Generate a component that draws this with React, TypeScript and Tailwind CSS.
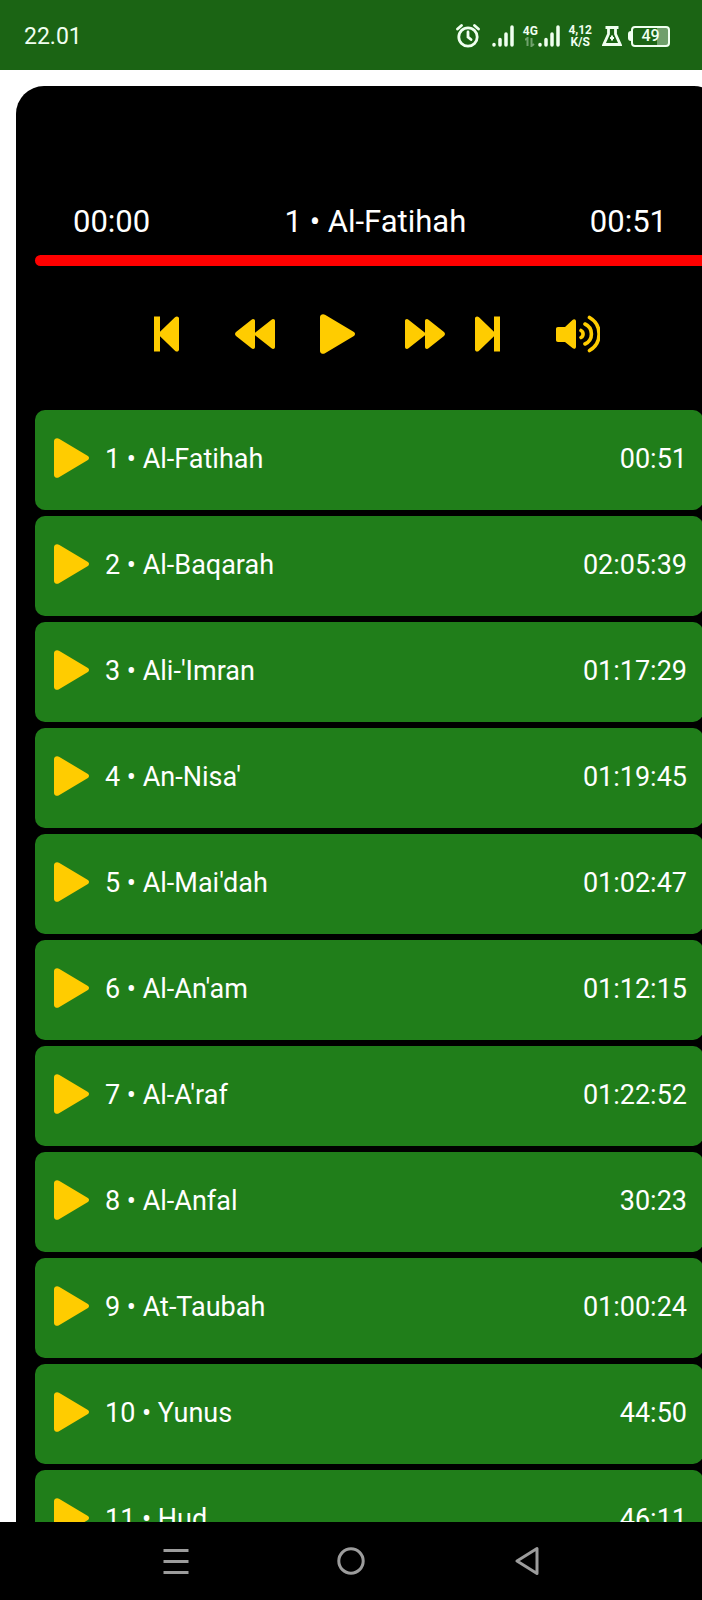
import { useState } from "react";

const surahs = [
  { title: "1 • Al-Fatihah", duration: "00:51" },
  { title: "2 • Al-Baqarah", duration: "02:05:39" },
  { title: "3 • Ali-'Imran", duration: "01:17:29" },
  { title: "4 • An-Nisa'", duration: "01:19:45" },
  { title: "5 • Al-Mai'dah", duration: "01:02:47" },
  { title: "6 • Al-An'am", duration: "01:12:15" },
  { title: "7 • Al-A'raf", duration: "01:22:52" },
  { title: "8 • Al-Anfal", duration: "30:23" },
  { title: "9 • At-Taubah", duration: "01:00:24" },
  { title: "10 • Yunus", duration: "44:50" },
  { title: "11 • Hud", duration: "46:11" },
];

function PlayIcon() {
  return (
    <svg width="35" height="40" viewBox="0 0 35 40" fill="currentColor" className="shrink-0">
      <path d="M0 3C0 .6 2.800-.6 5 .7L33.500 17.800c2 1.200 2 3.200 0 4.400L5 39.300C2.800 40.600 0 39.400 0 37Z" />
    </svg>
  );
}

function SkipIcon({ back = false }: { back?: boolean }) {
  return (
    <svg width="25" height="36" viewBox="0 0 25 36" fill="currentColor" className={back ? "-scale-x-100" : ""}>
      <path d="M0 2.500C0 .4 2.400-.2 4 1.300l15 14.500V.5h6v35h-6V20.200L4 34.700C2.400 36.200 0 35.600 0 33.500Z" />
    </svg>
  );
}

function SeekIcon({ back = false }: { back?: boolean }) {
  return (
    <svg width="40" height="30" viewBox="0 0 40 30" fill="currentColor" className={back ? "-scale-x-100" : ""}>
      <path d="M0 2C0 .2 2-.5 3.500.7L20 13.800V2c0-1.800 2-2.500 3.500-1.300L39 13c1.300 1.200 1.300 2.800 0 4L23.500 29.300C22 30.500 20 29.800 20 28V16.200L3.500 29.300C2 30.500 0 29.800 0 28Z" />
    </svg>
  );
}

function VolumeIcon() {
  return (
    <svg width="44" height="38" viewBox="0 0 44 38" fill="none" stroke="currentColor" strokeWidth="3.600" strokeLinecap="round">
      <path
        d="M2 12h7L16.500 5c1.500-1.300 3.500-.8 3.500 1.300v25.400c0 2.100-2 2.600-3.500 1.300L9 27H2c-1.300 0-2-.7-2-2V14c0-1.300.7-2 2-2Z"
        fill="currentColor"
        stroke="none"
      />
      <path d="M25 15.500a4 4 0 0 1 0 7M29 9a11 11 0 0 1 0 20M33.500 2.500a19 19 0 0 1 0 33" />
    </svg>
  );
}

function SignalIcon() {
  return (
    <svg width="22" height="22" viewBox="0 0 22 22" stroke="currentColor" strokeWidth="3.500" strokeLinecap="round">
      <path d="M2 19.500v.5M8 14.500V20M14 9V20M20 2v18" />
    </svg>
  );
}

function StatusBar() {
  return (
    <header className="flex h-[70px] shrink-0 items-center justify-between bg-[#1b6414] pt-0.5 pr-8 pl-6 text-[#f0fff0]">
      <time className="pt-0.5 text-[23px]">22.01</time>
      <div className="flex items-center">
        <svg width="24" height="24" viewBox="0 0 24 24" fill="none" stroke="currentColor" strokeWidth="2.800" strokeLinecap="round">
          <circle cx="12" cy="13" r="9.200" />
          <path d="M12 8v5l3 2.500M1.500 5l4-3.500M22.500 5l-4-3.500" />
        </svg>
        <div className="ml-3">
          <SignalIcon />
        </div>
        <div className="ml-2 flex w-4 flex-col items-center text-xs leading-3 font-bold">
          <span>4G</span>
          <svg width="10" height="10" viewBox="0 0 10 10" fill="none" stroke="currentColor" strokeWidth="2" opacity="0.400">
            <path d="M0 3l2.500-2v8M6.500 1v8L9 7" />
          </svg>
        </div>
        <SignalIcon />
        <div className="ml-2 flex flex-col items-center text-xs leading-3 font-bold">
          <span>4,12</span>
          <span>K/S</span>
        </div>
        <svg width="20" height="20" viewBox="0 0 20 20" fill="none" stroke="currentColor" strokeWidth="2.800" className="ml-2.5">
          <path d="M3.500 1.500h13M6.500 2v6L1.800 18.500h16.400L13.500 8V2" />
          <path d="M10 9.500v5M8 12h4" strokeWidth="2" />
        </svg>
        <div className="ml-1.5 h-2.5 w-[3px] rounded-l-sm bg-current" />
        <div className="flex h-[21px] w-[39px] items-center justify-center rounded-sm border-2 border-current bg-linear-to-r from-transparent from-70% to-[#6f9f6b] to-70% text-base font-medium">
          49
        </div>
      </div>
    </header>
  );
}

function Controls() {
  return (
    <div className="mt-12 ml-[119px] flex h-10 items-center text-[#ffcc00]">
      <button aria-label="Previous">
        <SkipIcon back />
      </button>
      <button aria-label="Rewind" className="ml-14">
        <SeekIcon back />
      </button>
      <button aria-label="Play" className="ml-[45px]">
        <PlayIcon />
      </button>
      <button aria-label="Fast forward" className="ml-[50px]">
        <SeekIcon />
      </button>
      <button aria-label="Next" className="ml-[30px]">
        <SkipIcon />
      </button>
      <button aria-label="Volume" className="ml-14">
        <VolumeIcon />
      </button>
    </div>
  );
}

function NavBar() {
  return (
    <nav className="grid h-[78px] shrink-0 grid-cols-3 place-items-center bg-black px-[12.5%] text-[#9c9c9c]">
      <button aria-label="Recent apps">
        <svg width="26" height="28" viewBox="0 0 26 28" stroke="currentColor" strokeWidth="3">
          <path d="M.5 3.500h25M.5 14.500h25M.5 25.500h25" />
        </svg>
      </button>
      <button aria-label="Home">
        <svg width="28" height="28" viewBox="0 0 28 28" fill="none" stroke="currentColor" strokeWidth="3">
          <circle cx="14" cy="14" r="12.200" />
        </svg>
      </button>
      <button aria-label="Back">
        <svg width="24" height="30" viewBox="0 0 24 30" fill="none" stroke="currentColor" strokeWidth="3" strokeLinejoin="round">
          <path d="M22 2.500v25L2 15Z" />
        </svg>
      </button>
    </nav>
  );
}

export default function App() {
  const [current, setCurrent] = useState(0);
  const [position, setPosition] = useState(0);

  return (
    <div className="flex h-screen flex-col overflow-hidden bg-white font-['Roboto',sans-serif]">
      <StatusBar />

      <main className="flex-1 overflow-hidden pt-4 pl-4">
        {/* The player is a little wider than the screen and runs off its right side */}
        <div className="-mr-5 rounded-[28px] bg-black px-[19px] pt-[116px] text-white">
          <div className="flex justify-between pr-9 pl-[38px] text-[31px] leading-10">
            <span className="w-[88px]">00:00</span>
            <span>{surahs[current].title}</span>
            <span>{surahs[current].duration}</span>
          </div>

          <div className="mt-[13px] -mr-2 flex">
            <input
              type="range"
              aria-label="Seek"
              min={0}
              max={100}
              value={position}
              onChange={(e) => setPosition(Number(e.target.value))}
              className="h-[11px] w-full appearance-none rounded-full bg-[#ff0000] [&::-webkit-slider-thumb]:size-0 [&::-webkit-slider-thumb]:appearance-none"
            />
          </div>

          <Controls />

          <ul className="mt-14 flex flex-col gap-1.5">
            {surahs.map((surah, i) => (
              <li key={surah.title}>
                <button
                  onClick={() => setCurrent(i)}
                  className="flex h-[100px] w-full items-start rounded-[10px] bg-[#207e1a] pt-7 pr-4 pl-[19px] text-left text-[27px] leading-[42px]"
                >
                  <span className="text-[#ffcc00]">
                    <PlayIcon />
                  </span>
                  <span className="ml-4 flex-1">{surah.title}</span>
                  <span>{surah.duration}</span>
                </button>
              </li>
            ))}
          </ul>
        </div>
      </main>

      <NavBar />
    </div>
  );
}
